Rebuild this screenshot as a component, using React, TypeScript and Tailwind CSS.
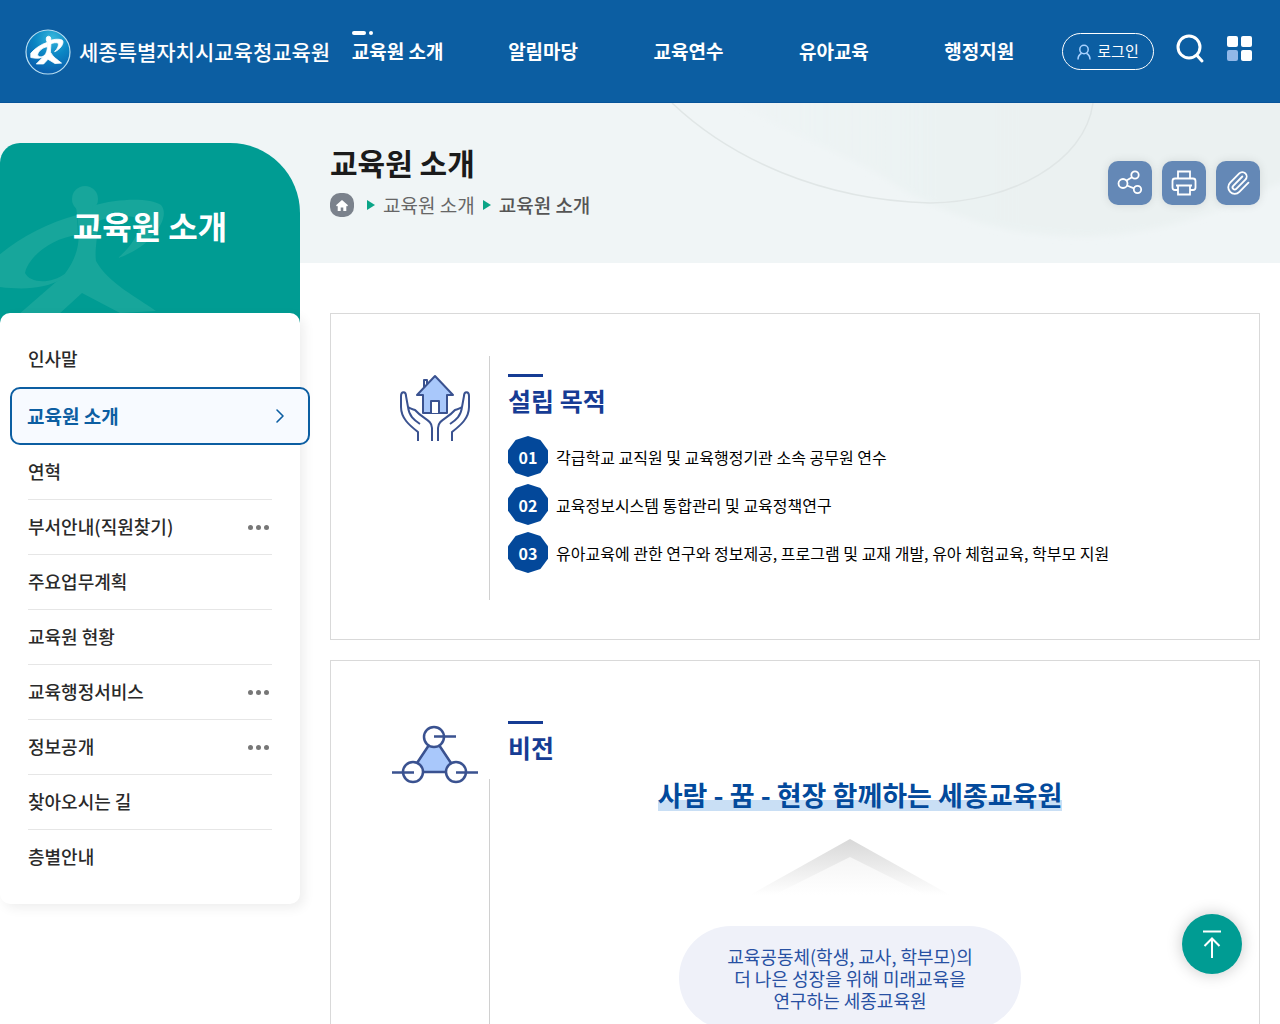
import { ChevronRight, Paperclip } from 'lucide-react';

const navItems = ['교육원 소개', '알림마당', '교육연수', '유아교육', '행정지원'];

const sideItems = [
  { label: '인사말' },
  { label: '교육원 소개', active: true },
  { label: '연혁' },
  { label: '부서안내(직원찾기)', more: true },
  { label: '주요업무계획' },
  { label: '교육원 현황' },
  { label: '교육행정서비스', more: true },
  { label: '정보공개', more: true },
  { label: '찾아오시는 길' },
  { label: '층별안내' },
];

const purposes = [
  '각급학교 교직원 및 교육행정기관 소속 공무원 연수',
  '교육정보시스템 통합관리 및 교육정책연구',
  '유아교육에 관한 연구와 정보제공, 프로그램 및 교재 개발, 유아 체험교육, 학부모 지원',
];

// running figure, shared by the logo and the sidebar background
function Runner() {
  return (
    <g fillRule="evenodd">
      <circle cx="85" cy="56" r="13" />
      <path d="M76 64C80 92 82 108 64 132L18 172H58L82 150L120 170L156 168C138 155 108 140 96 118C94 104 100 88 97 64Z" />
      <path d="M77 72C45 80 10 100-12 122V142C20 148 45 146 62 136L66 130C50 142 30 140 25 130C28 115 50 95 78 92Z" />
      <path d="M92 63C120 55 150 55 161 62C172 75 150 105 118 115C135 100 142 85 138 75C125 71 108 73 94 80Z" />
    </g>
  );
}

function Logo() {
  return (
    <svg viewBox="0 0 46 46" className="size-[46px] shrink-0" aria-hidden="true">
      <defs>
        <radialGradient id="logoBg" cx="60%" cy="18%" r="80%">
          <stop offset="0" stopColor="#35b6dc" />
          <stop offset="0.5" stopColor="#0b86c4" />
          <stop offset="1" stopColor="#0a5fae" />
        </radialGradient>
      </defs>
      <circle cx="23" cy="23" r="22" fill="url(#logoBg)" stroke="#b9dff2" strokeWidth="1.2" />
      <g fill="#fff" stroke="#fff" strokeWidth="4" transform="translate(8 -2) scale(.183 .215)">
        <Runner />
      </g>
    </svg>
  );
}

function Header() {
  return (
    <header className="flex h-[103px] items-center border-b border-[#07549a] bg-[#0c5ea2] pt-px text-white">
      <a href="#" className="flex w-[325px] shrink-0 items-center gap-2 pl-[25px] text-[21px] font-medium whitespace-nowrap">
        <Logo />
        세종특별자치시교육청교육원
      </a>
      <nav className="grid flex-1 grid-cols-5 text-center text-[19px] font-bold whitespace-nowrap">
        {navItems.map((item, i) => (
          <div key={item}>
            <a href="#" className="relative inline-block">
              {i === 0 && (
                <span className="absolute -top-1.5 left-0 flex gap-[3px]">
                  <span className="h-1 w-3.5 rounded-full bg-white" />
                  <span className="size-1 rounded-full bg-white" />
                </span>
              )}
              {item}
            </a>
          </div>
        ))}
      </nav>
      <div className="flex w-[228px] shrink-0 items-center pl-2.5">
        <button className="flex h-[37px] w-[92px] items-center justify-center gap-1.5 rounded-full border border-white text-[15px]">
          <svg viewBox="0 0 14 16" className="h-4 w-3.5" fill="none" stroke="#a9d2ff" strokeWidth="1.5" aria-hidden="true">
            <circle cx="7" cy="5.5" r="4.2" />
            <path d="M1 15.5c0-3.200 1.500-5.200 3.600-6.200M13 15.500c0-3.200-1.500-5.200-3.600-6.200" />
          </svg>
          로그인
        </button>
        <button aria-label="검색" className="ml-[21px] pb-1.5">
          <svg viewBox="0 0 30 30" className="size-[30px]" fill="none" stroke="#fff" strokeWidth="3" strokeLinecap="round">
            <circle cx="14" cy="13" r="11" />
            <path d="M22 21.500L27 27" />
          </svg>
        </button>
        <button aria-label="전체메뉴" className="ml-[22px] grid grid-cols-2 gap-[3px] pb-1.5">
          <span className="size-[11px] rounded-xs bg-white" />
          <span className="size-[11px] rounded-xs bg-white" />
          <span className="size-[11px] rounded-xs bg-[#92b8e8]" />
          <span className="size-[11px] rounded-xs bg-white" />
        </button>
      </div>
    </header>
  );
}

function Triangle() {
  return (
    <svg viewBox="0 0 8 10" className="h-2.5 w-2" fill="#0aa587" aria-hidden="true">
      <path d="M0 0L8 5L0 10Z" />
    </svg>
  );
}

function ShareIcon() {
  return (
    <svg viewBox="0 0 26 26" className="size-[26px]" fill="none" stroke="#fff" strokeWidth="1.8" aria-hidden="true">
      <circle cx="6" cy="13.500" r="4.500" />
      <circle cx="18" cy="5" r="3.700" />
      <circle cx="20.500" cy="19.500" r="3.700" />
      <path d="M9.500 10.500L15 7.200M10 15.500L17 18.300" />
    </svg>
  );
}

function PrintIcon() {
  return (
    <svg viewBox="0 0 26 26" className="size-[26px]" fill="none" stroke="#fff" strokeWidth="1.8" aria-hidden="true">
      <path d="M7 8.500V1.500H19V8.500M7 20H4Q1.500 20 1.500 17.500V11Q1.500 8.500 4 8.500H22Q24.500 8.500 24.500 11V17.500Q24.500 20 22 20H19" />
      <path d="M7 15.500H19V24.500H7ZM5 15.500H21" />
    </svg>
  );
}

function TitleBand() {
  const toolClass = 'flex size-11 items-center justify-center rounded-[10px] bg-[#6488b6] text-white shadow-[0_0_10px_rgba(0,0,0,0.1)]';
  return (
    <div className="relative flex h-40 justify-between bg-[#f0f5f6] pr-5 pl-[330px]">
      <svg viewBox="0 0 640 160" className="absolute top-0 right-0 h-40 w-[640px]" fill="none" aria-hidden="true">
        <defs>
          <linearGradient id="bandShade" x1="0" y1="0" x2="1" y2="0">
            <stop offset="0" stopColor="#ebf2f2" stopOpacity="0.2" />
            <stop offset="0.4" stopColor="#ebf2f2" />
            <stop offset="1" stopColor="#ebf1f1" />
          </linearGradient>
          <filter id="bandSoft" x="-5%" y="-5%" width="110%" height="115%">
            <feGaussianBlur stdDeviation="3" />
          </filter>
        </defs>
        <path d="M80-10C150 35 210 50 260 85C330 125 390 134 450 134C530 130 590 105 660 70V-10Z" fill="url(#bandShade)" filter="url(#bandSoft)" />
        <path d="M32 0C90 55 180 97 290 100C370 99 445 60 453 0" stroke="#e0e6e6" strokeWidth="1.5" />
      </svg>
      <div className="relative pt-[38px]">
        <h1 className="text-[30px] leading-[42px] font-bold text-[#1b1b1b]">교육원 소개</h1>
        <nav aria-label="현재 위치" className="mt-2 flex items-center text-[19px] leading-7 text-[#666]">
          <a href="#" aria-label="홈" className="mr-[13px] flex size-6 items-center justify-center rounded-[10px] bg-[#7b828c]">
            <svg viewBox="0 0 12 11" className="h-[11px] w-3" fill="#fff">
              <path d="M6 0L12 5.200L11 6.400L10.300 5.800V11H7.300V7.500H4.700V11H1.700V5.800L1 6.400L0 5.200Z" />
            </svg>
          </a>
          <Triangle />
          <a href="#" className="mx-2">교육원 소개</a>
          <Triangle />
          <strong className="ml-2 font-medium text-[#555]">교육원 소개</strong>
        </nav>
      </div>
      <div className="relative flex gap-2.5 pt-[58px]">
        <button aria-label="공유" className={toolClass}><ShareIcon /></button>
        <button aria-label="인쇄" className={toolClass}><PrintIcon /></button>
        <button aria-label="링크 복사" className={toolClass}><Paperclip size={26} strokeWidth={1.7} /></button>
      </div>
    </div>
  );
}

function Sidebar() {
  return (
    <aside className="relative -mt-[120px] w-[300px] shrink-0 self-start">
      <div className="relative -mb-2.5 h-[180px] overflow-hidden rounded-tl-[20px] rounded-tr-[70px] bg-[#009c93]">
        <svg viewBox="0 0 300 180" className="absolute inset-0" fill="#17a69b" aria-hidden="true">
          <Runner />
        </svg>
        <h2 className="relative pt-[58px] text-center text-[32px] leading-[48px] font-bold text-white">교육원 소개</h2>
      </div>
      <ul className="relative rounded-[10px] bg-white px-7 pt-[19px] pb-[19px] text-[18px] font-medium text-[#2a2a2a] shadow-[4px_4px_12px_rgba(0,0,0,0.07)]">
        {sideItems.map((item, i) =>
          item.active ? (
            <li key={item.label} className="-mr-[38px] -ml-[18px]">
              <a href="#" aria-current="page" className="flex h-[58px] items-center justify-between rounded-[10px] border-2 border-[#0c5ea2] bg-[#f7faff] pr-4 pl-[15px] text-[19px] leading-[26px] font-bold text-[#0c5ea2]">
                {item.label}
                <ChevronRight size={24} strokeWidth={1.6} />
              </a>
            </li>
          ) : (
            <li key={item.label} className={i === 0 || i === sideItems.length - 1 ? '' : 'border-b border-[#e6e6e6]'}>
              <a href="#" className={i === 0 || i === sideItems.length - 1 ? 'flex h-[55px] items-center' : 'flex h-[54px] items-center justify-between'}>
                <span className="pb-0.5">{item.label}</span>
                {item.more && (
                  <span className="mr-[3px] flex gap-[3px]">
                    <span className="size-[5px] rounded-full bg-[#777]" />
                    <span className="size-[5px] rounded-full bg-[#777]" />
                    <span className="size-[5px] rounded-full bg-[#777]" />
                  </span>
                )}
              </a>
            </li>
          )
        )}
      </ul>
    </aside>
  );
}

function HandsIcon() {
  return (
    <svg viewBox="0 0 72 68" className="h-[68px] w-[72px]" fill="none" stroke="#3a5290" strokeWidth="2" strokeLinejoin="round" aria-hidden="true">
      <path d="M25 14V6H28V11" />
      <path d="M24 21V39H48V21H54L36 2L18 21Z" fill="#a9c8fb" />
      <path d="M32 39V27H40V39" fill="#fff" />
      <path d="M19 67V58C10 51 2 44 2 33V22C2 17 7 17 7 22L9 33C12 35 13 35 16 36C24 45 33 46 33 54V67M9 33C10 42 15 46 21 50" />
      <path d="M53 67V58C62 51 70 44 70 33V22C70 17 65 17 65 22L63 33C60 35 59 35 56 36C48 45 39 46 39 54V67M63 33C62 42 57 46 51 50" />
    </svg>
  );
}

function NetworkIcon() {
  return (
    <svg viewBox="0 0 88 60" className="h-[60px] w-[88px]" fill="none" stroke="#3a5290" strokeWidth="2.500" aria-hidden="true">
      <path d="M38 20L26 38L31 47H55L60 38L48 20Z" fill="#a9c8fb" stroke="none" />
      <path d="M38 20L26 38M48 20L60 38M31 47H55" />
      <circle cx="43" cy="12" r="10" fill="#fff" />
      <circle cx="22" cy="47" r="10" fill="#fff" />
      <circle cx="65" cy="47" r="10" fill="#fff" />
      <path d="M43 11.500H65M1 47.500H23M65 47.500H87" />
    </svg>
  );
}

function SectionTitle({ children }: { children: string }) {
  return (
    <h3 className="pb-0.5 text-[25px] leading-9 font-bold text-[#163c94]">
      <span className="mb-[5px] block h-[3px] w-[35px] bg-[#163c94]" />
      {children}
    </h3>
  );
}

function Purpose() {
  return (
    <section className="flex border border-[#d9d9d9] pt-[42px] pb-[39px]">
      <div className="flex w-[159px] shrink-0 border-r border-[#d0d0d0] pt-[18px] pl-[68px]">
        <HandsIcon />
      </div>
      <div className="min-h-[244px] flex-1 pt-[18px] pr-5 pl-[18px]">
        <SectionTitle>설립 목적</SectionTitle>
        <ol className="mt-4 space-y-[7px]">
          {purposes.map((text, i) => (
            <li key={text} className="flex items-center gap-2 text-base text-black">
              <span className="flex h-[41px] w-10 shrink-0 items-center justify-center bg-[#03489a] font-bold text-white [clip-path:polygon(50%_0,81%_9.5%,100%_34.5%,100%_65.5%,81%_90.5%,50%_100%,19%_90.5%,0_65.5%,0_34.5%,19%_9.5%)]">
                0{i + 1}
              </span>
              {text}
            </li>
          ))}
        </ol>
      </div>
    </section>
  );
}

function Vision() {
  return (
    <section className="mt-5 flex border border-[#d9d9d9] pb-10">
      <div className="flex w-[159px] shrink-0 flex-col pt-16 pl-[60px]">
        <NetworkIcon />
        <div className="mt-[-6px] ml-auto w-px flex-1 bg-[#d0d0d0]" />
      </div>
      <div className="flex-1 pt-[60px] pl-[18px]">
        <SectionTitle>비전</SectionTitle>
        <div className="flex flex-col items-center pt-[11px] pr-[67px]">
          <p className="ml-5 bg-linear-to-b from-transparent from-68% to-[#c9dff5] to-68% text-[27px] leading-[33px] font-bold text-[#034a9c]">
            사람 - 꿈 - 현장 함께하는 세종교육원
          </p>
          <svg viewBox="0 0 200 56" className="mt-7 h-14 w-[200px]" aria-hidden="true">
            <defs>
              <linearGradient id="roof" x1="0" y1="0" x2="0" y2="1">
                <stop offset="0" stopColor="#d8d8d8" />
                <stop offset="1" stopColor="#fff" />
              </linearGradient>
              <linearGradient id="roofInner" x1="0" y1="0" x2="0" y2="1">
                <stop offset="0" stopColor="#f5f5f5" />
                <stop offset="1" stopColor="#fff" />
              </linearGradient>
            </defs>
            <path d="M100 0L200 56H0Z" fill="url(#roof)" />
            <path d="M100 18L176 56H24Z" fill="url(#roofInner)" />
          </svg>
          <p className="mt-[31px] flex h-[104px] w-[342px] items-center justify-center rounded-full bg-[#eff1f9] text-center text-[18px] leading-[22px] text-[#2750a2]">
            교육공동체(학생, 교사, 학부모)의
            <br />더 나은 성장을 위해 미래교육을
            <br />연구하는 세종교육원
          </p>
        </div>
      </div>
    </section>
  );
}

export default function App() {
  return (
    <div className="min-h-screen bg-white font-['Noto_Sans_CJK_KR',sans-serif]">
      <Header />
      <TitleBand />
      <div className="flex">
        <Sidebar />
        <main className="min-w-0 flex-1 pt-[50px] pr-5 pb-10 pl-[30px]">
          <Purpose />
          <Vision />
        </main>
      </div>
      <button aria-label="맨 위로" className="fixed right-[38px] bottom-[50px] flex size-[60px] items-center justify-center rounded-full bg-[#009c93] shadow-[0_0_16px_rgba(0,0,0,0.22)]">
        <svg viewBox="0 0 20 28" className="h-7 w-5" fill="none" stroke="#fff" strokeWidth="2">
          <path d="M1 1.500H19M10 28V9M2.500 16L10 8.500L17.500 16" />
        </svg>
      </button>
    </div>
  );
}
